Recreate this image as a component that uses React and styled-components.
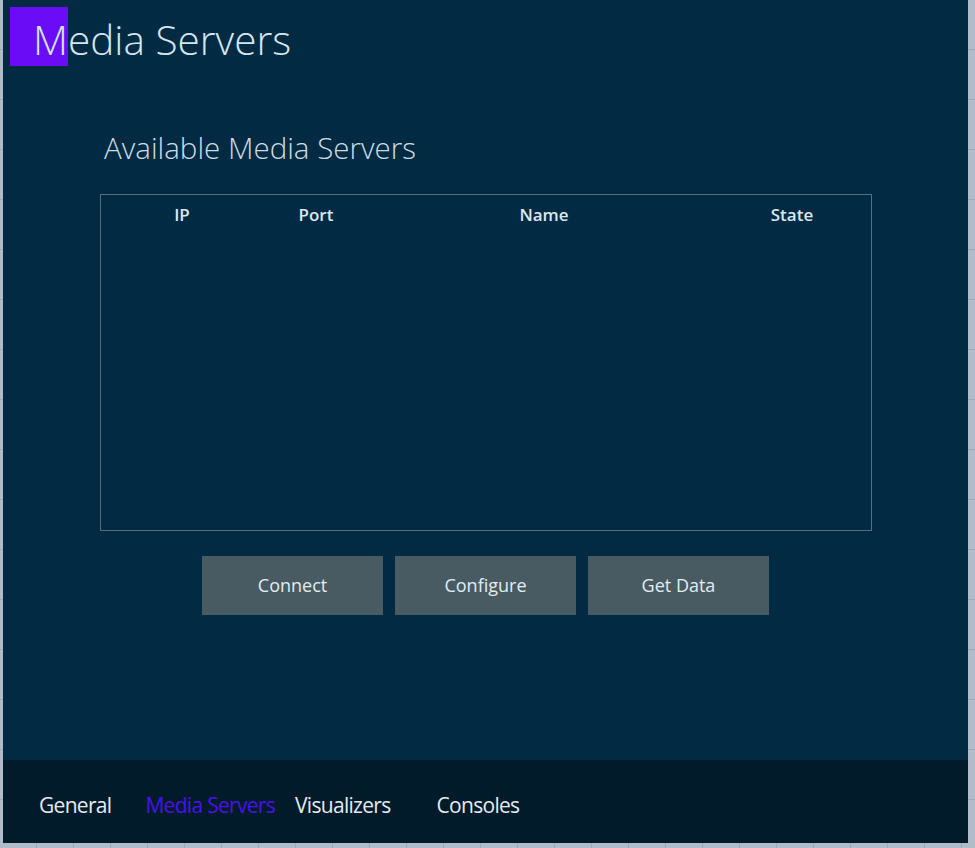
import React from "react";
import styled, { createGlobalStyle } from "styled-components";

const Global = createGlobalStyle`
  html, body {
    margin: 0;
    padding: 0;
  }
  body {
    width: 975px;
    height: 848px;
    overflow: hidden;
    background-color: #b1bccb;
    background-image:
      repeating-linear-gradient(to right, transparent 0 36px, #9ea9b9 36px 37px),
      repeating-linear-gradient(to bottom, transparent 0 49px, #9ea9b9 49px 50px);
    font-family: "Open Sans", "Noto Sans", sans-serif;
  }
`;

const Window = styled.div`
  margin-left: 3px;
  width: 965px;
  height: 843px;
  background: #022a42;
  display: flex;
  flex-direction: column;
  box-sizing: border-box;
`;

const Main = styled.div`
  flex: 1;
  display: flex;
  flex-direction: column;
`;

const PageTitle = styled.h1`
  position: relative;
  margin: 0;
  padding: 11px 0 0 30px;
  height: 60px;
  font-size: 40.5px;
  font-weight: 300;
  color: #d3e6ef;
  line-height: 58px;
  z-index: 0;

  &::before {
    content: "";
    position: absolute;
    left: 7px;
    top: 7px;
    width: 58px;
    height: 59px;
    background: #6b0cf7;
    z-index: -1;
  }
`;

const Section = styled.section`
  padding: 57px 0 0 97px;
  width: 772px;
`;

const SectionTitle = styled.h2`
  margin: 0 0 26px 4px;
  font-size: 29.5px;
  font-weight: 300;
  color: #c9dde8;
  line-height: 40px;
`;

const Table = styled.div`
  height: 337px;
  border: 1px solid #536f80;
  box-sizing: border-box;
`;

const HeaderRow = styled.div`
  display: grid;
  grid-template-columns: 162px 106px 350px 146px;
  padding-top: 8px;
`;

const HeaderCell = styled.div`
  text-align: center;
  font-size: 17px;
  font-weight: 600;
  color: #dbe7ee;
  line-height: 24px;
`;

const Buttons = styled.div`
  display: flex;
  gap: 12px;
  padding: 25px 0 0 102px;
`;

const Button = styled.button`
  width: 181px;
  height: 59px;
  border: none;
  background: #485b63;
  color: #e3ecef;
  font-family: "Open Sans", "Noto Sans", sans-serif;
  font-size: 18px;
  cursor: pointer;
  padding: 0 0 2px;
`;

const Footer = styled.nav`
  height: 83px;
  background: #021b2b;
  display: flex;
  align-items: center;
  padding: 0 0 0 36px;
  box-sizing: border-box;
`;

const Tab = styled.span`
  font-family: "Open Sans", "Noto Sans", sans-serif;
  font-size: 21px;
  letter-spacing: -0.7px;
  color: ${(p) => (p.$active ? "#4a12e6" : "#e2ecf1")};
  margin-right: ${(p) => p.$gap}px;
  padding-top: 7px;
`;

const columns = ["IP", "Port", "Name", "State"];
const actions = ["Connect", "Configure", "Get Data"];
const tabs = [
  { label: "General", gap: 34 },
  { label: "Media Servers", gap: 20, active: true },
  { label: "Visualizers", gap: 46 },
  { label: "Consoles", gap: 0 },
];

export default function App() {
  return (
    <>
      <Global />
      <Window>
        <Main>
          <PageTitle>Media Servers</PageTitle>
          <Section>
            <SectionTitle>Available Media Servers</SectionTitle>
            <Table>
              <HeaderRow>
                {columns.map((c) => (
                  <HeaderCell key={c}>{c}</HeaderCell>
                ))}
              </HeaderRow>
            </Table>
            <Buttons>
              {actions.map((a) => (
                <Button key={a}>{a}</Button>
              ))}
            </Buttons>
          </Section>
        </Main>
        <Footer>
          {tabs.map((t) => (
            <Tab key={t.label} $active={t.active} $gap={t.gap}>
              {t.label}
            </Tab>
          ))}
        </Footer>
      </Window>
    </>
  );
}
